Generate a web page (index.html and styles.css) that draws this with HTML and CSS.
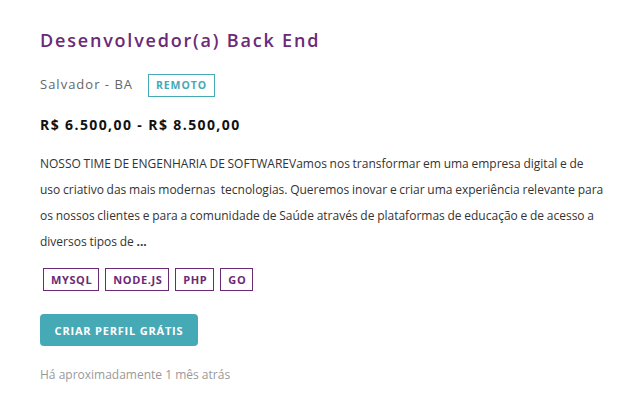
FILE: index.html
```html
<!DOCTYPE html>
<html lang="pt-BR">
<head>
<meta charset="utf-8">
<link rel="stylesheet" href="styles.css">
</head>
<body>
<article class="job">
  <h1 class="job-title">Desenvolvedor(a) Back End</h1>
  <div class="job-meta">
    <span class="job-location">Salvador - BA</span>
    <span class="job-badge">REMOTO</span>
  </div>
  <p class="job-salary">R$ 6.500,00 - R$ 8.500,00</p>
  <p class="job-desc">NOSSO TIME DE ENGENHARIA DE SOFTWAREVamos nos transformar em uma empresa digital e de<br>uso criativo das mais modernas&nbsp; tecnologias. Queremos inovar e criar uma experiência relevante para<br>os nossos clientes e para a comunidade de Saúde através de plataformas de educação e de acesso a<br>diversos tipos de <strong>...</strong></p>
  <ul class="job-tags">
    <li class="tag">MYSQL</li>
    <li class="tag">NODE.JS</li>
    <li class="tag">PHP</li>
    <li class="tag">GO</li>
  </ul>
  <button class="job-cta">CRIAR PERFIL GRÁTIS</button>
  <p class="job-date">Há aproximadamente 1 mês atrás</p>
</article>
</body>
</html>
```

FILE: styles.css
```css
* { box-sizing: border-box; }
html, body { margin: 0; padding: 0; background: #fff; }
body { font-family: "Open Sans", "Liberation Sans", sans-serif; }
.job { padding: 28px 16px 0 40px; width: 631px; }
.job-title {
  margin: 0;
  font-size: 18px;
  line-height: 24px;
  font-weight: 600;
  letter-spacing: 1.8px;
  color: #6b2a77;
}
.job-meta {
  display: flex;
  align-items: baseline;
  gap: 15px;
  margin-top: 22px;
}
.job-location {
  font-size: 13px;
  letter-spacing: 1px;
  color: #666;
}
.job-badge {
  border: 1px solid #46a9b6;
  color: #46a9b6;
  font-size: 10.5px;
  font-weight: 700;
  letter-spacing: 0.9px;
  height: 23px;
  line-height: 21px;
  padding: 0 7px;
}
.job-salary {
  margin: 18px 0 0;
  font-size: 14px;
  font-weight: 700;
  letter-spacing: 1.4px;
  color: #111;
  line-height: 20px;
}
.job-desc {
  margin: 16px 0 0;
  font-size: 12px;
  line-height: 26px;
  word-spacing: -0.4px;
  color: #333;
}
.job-desc strong { font-weight: 700; }
.job-tags {
  list-style: none;
  margin: 13px 0 0;
  padding: 0 0 0 3px;
  display: flex;
  gap: 6px;
}
.tag {
  border: 1px solid #6b2a77;
  color: #6b2a77;
  font-size: 11px;
  font-weight: 700;
  letter-spacing: 0.6px;
  height: 23px;
  line-height: 21px;
  padding: 0 6px 0 7px;
}
.job-cta {
  display: block;
  margin-top: 23px;
  background: #46a9b6;
  color: #fff;
  border: 0;
  border-radius: 4px;
  height: 32px;
  width: 158px;
  font-family: inherit;
  font-size: 11px;
  font-weight: 700;
  letter-spacing: 0.8px;
}
.job-date {
  margin: 20px 0 0;
  font-size: 12px;
  line-height: 17px;
  color: #999;
}
```
